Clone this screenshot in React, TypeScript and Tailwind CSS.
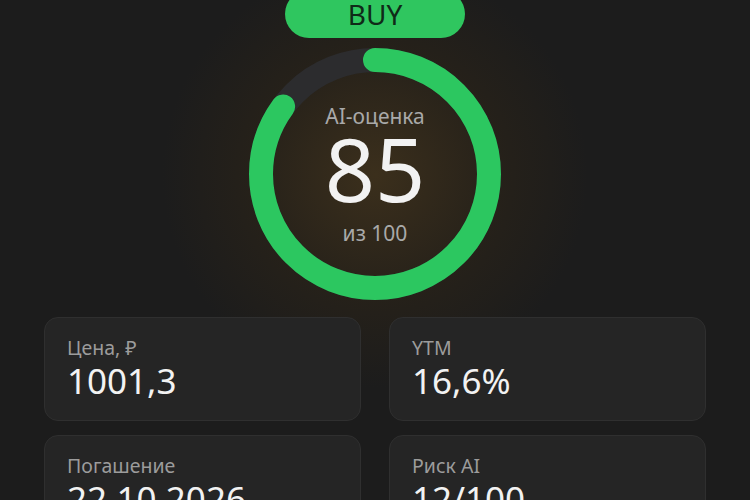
import React from "react";

const stats = [
  { label: "Цена, ₽", value: "1001,3" },
  { label: "YTM", value: "16,6%" },
  { label: "Погашение", value: "22.10.2026" },
  { label: "Риск AI", value: "12/100" },
];

function ScoreRing({ score }: { score: number }) {
  const r = 114;
  const c = 2 * Math.PI * r;
  const dash = (score / 100) * c;

  return (
    <div className="relative h-[252px] w-[252px]">
      <svg width="252" height="252" viewBox="0 0 252 252" className="-rotate-90">
        <circle cx="126" cy="126" r={r} fill="none" stroke="#2c2c2e" strokeWidth="24" />
        <circle
          cx="126"
          cy="126"
          r={r}
          fill="none"
          stroke="#2cc760"
          strokeWidth="24"
          strokeLinecap="round"
          strokeDasharray={`${dash} ${c}`}
        />
      </svg>
      <div className="absolute inset-0 flex flex-col items-center pt-[58px]">
        <span className="text-[21px] leading-[21px] text-[#a9a9a9]">AI-оценка</span>
        <span className="mt-[1px] text-[88px] leading-[80px] text-[#f2f2f2]">{score}</span>
        <span className="mt-[15px] text-[21px] leading-[21px] text-[#a9a9a9]">из 100</span>
      </div>
    </div>
  );
}

export default function App() {
  return (
    <div
      className="relative h-[500px] w-[750px] overflow-hidden bg-[#1c1c1c]"
      style={{ fontFamily: '"Noto Sans", "Open Sans", sans-serif' }}
    >
      {/* warm glow behind the ring */}
      <div className="pointer-events-none absolute left-[160px] top-[-40px] h-[430px] w-[430px] rounded-full bg-[radial-gradient(circle,rgba(80,60,28,0.6)_0%,rgba(52,40,22,0.38)_42%,rgba(28,28,28,0)_70%)]" />

      <div className="relative flex flex-col items-center">
        <div className="-mt-[10px] flex h-[48px] w-[180px] items-center justify-center rounded-full bg-[#2fc65f]">
          <span className="text-[28px] leading-none text-[#0f2a18]">BUY</span>
        </div>

        <div className="mt-[10px]">
          <ScoreRing score={85} />
        </div>

        <div className="mt-[17px] grid w-[662px] grid-cols-2 gap-x-[28px] gap-y-[14px]">
          {stats.map((s) => (
            <div
              key={s.label}
              className="h-[104px] rounded-[14px] border border-[#2f2f2f] bg-[#252525] px-[22px] pt-[17px]"
            >
              <div className="text-[19.5px] leading-[26px] text-[#9c9c9c]">{s.label}</div>
              <div className="text-[35px] leading-[40px] text-[#f2f2f2]">{s.value}</div>
            </div>
          ))}
        </div>
      </div>
    </div>
  );
}
